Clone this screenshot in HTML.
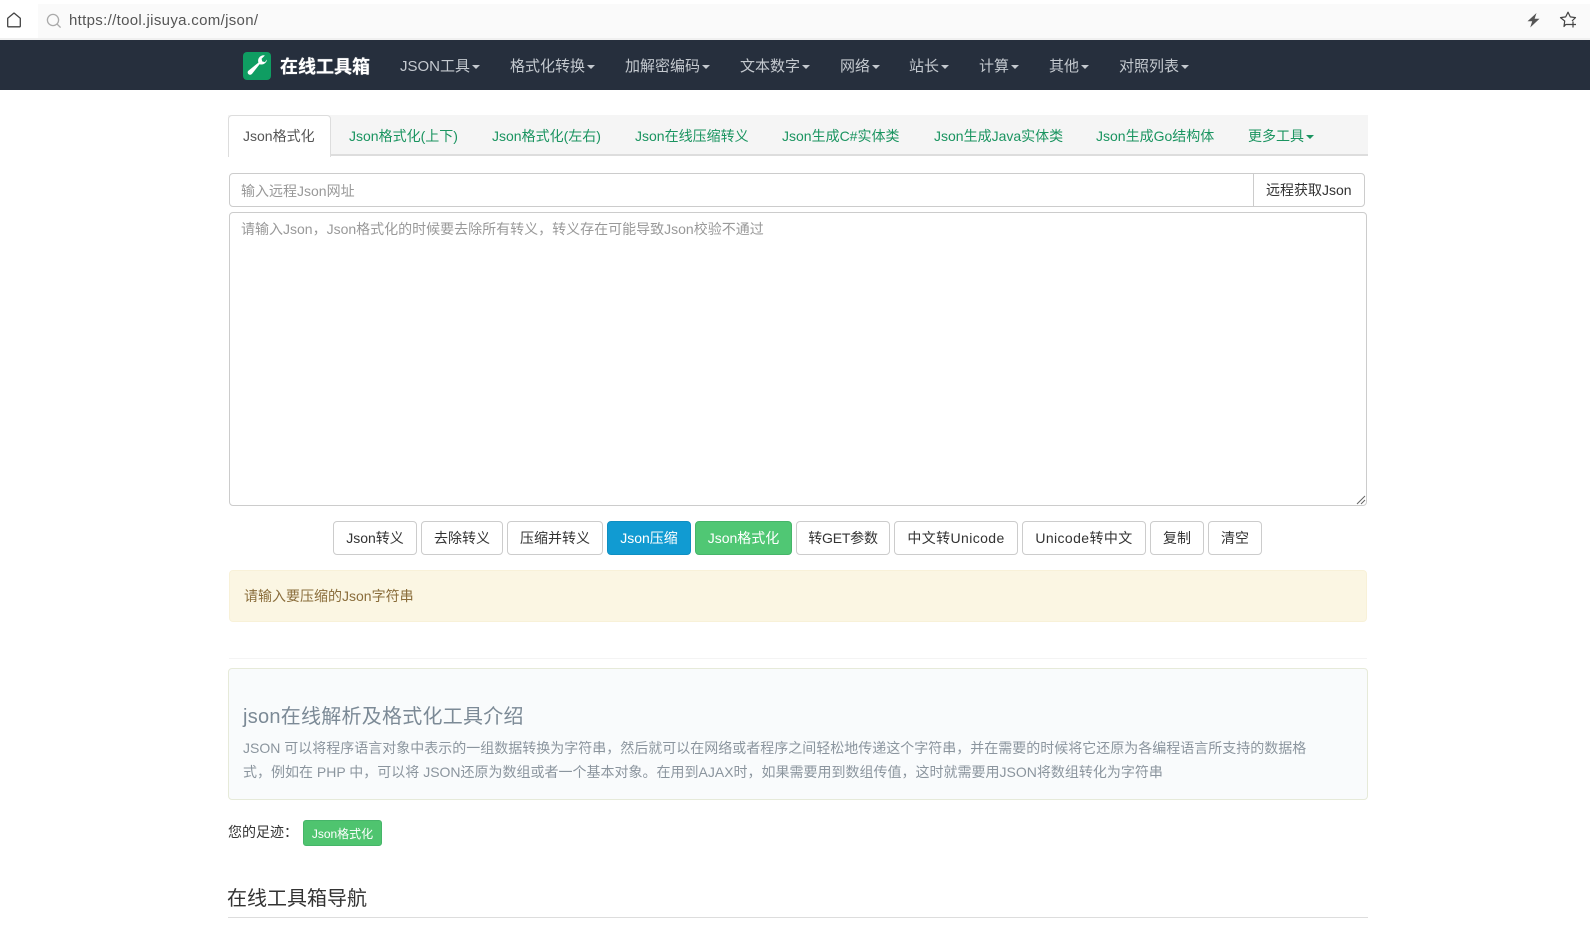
<!DOCTYPE html>
<html lang="zh-CN">
<head>
<meta charset="utf-8">
<title>Json格式化</title>
<style>
html,body{margin:0;padding:0;background:#fff;width:1590px;height:927px;overflow:hidden}
body{position:relative;font-family:"Liberation Sans","Noto Sans CJK SC",sans-serif;font-size:14px;color:#333}
.a{position:absolute;box-sizing:border-box}
.t{position:absolute;white-space:nowrap;line-height:20px;height:20px}
.nav{color:#c4c9cf;font-size:15px}
.tab{color:#1a9460;font-size:14px}
.caret{display:inline-block;width:0;height:0;margin-left:2px;vertical-align:middle;border-top:4px solid;border-left:4px solid transparent;border-right:4px solid transparent}
.btn{position:absolute;box-sizing:border-box;top:521px;height:34px;line-height:32px;text-align:center;white-space:nowrap;border:1px solid #ccc;border-radius:4px;background:#fff;color:#333;font-size:14px}
</style>
</head>
<body>
<!-- browser bar -->
<div class="a" style="left:38px;top:4px;width:1552px;height:34px;background:#fafafa"></div>
<div class="a" style="left:0;top:38px;width:1590px;height:2px;background:#f0f0f0"></div>
<svg class="a" style="left:6px;top:12px" width="16" height="16" viewBox="0 0 16 16" fill="none" stroke="#444" stroke-width="1.3"><path d="M1.700 6.200 8 1l6.300 5.200v8.100c0 .3-.2.5-.5.5H2.200c-.3 0-.5-.2-.5-.5z" stroke-linejoin="round"/></svg>
<svg class="a" style="left:46px;top:13px" width="16" height="16" viewBox="0 0 16 16" fill="none" stroke="#aaa" stroke-width="1.3"><circle cx="7" cy="7" r="5.6"/><path d="M11 11l3.600 3.600"/></svg>
<div class="t" style="left:69px;top:11px;font-size:15px;letter-spacing:.32px;color:#555">https://tool.jisuya.com/json/</div>
<svg class="a" style="left:1526px;top:12px" width="15" height="16" viewBox="0 0 15 16"><path d="M10.500 1 1.500 9.200h4.700L4.200 15.500 13.500 6.800H8.600z" fill="#555"/></svg>
<svg class="a" style="left:1559px;top:11px" width="18" height="17" viewBox="0 0 18 17" fill="none" stroke="#444" stroke-width="1.2"><path d="M11 13.500H6.700L5 15.500l.7-5.500L1.500 6.600l5.200-.7L9 1.200l2.300 4.700 5.200.7-3.500 3.400" stroke-linejoin="round"/><path d="M14 10.500v6M11 13.500h6"/></svg>

<!-- nav -->
<div class="a" style="left:0;top:40px;width:1590px;height:50px;background:#262f3d"></div>
<div class="a" style="left:243px;top:52px;width:28px;height:28px;background:#0f9d62;border-radius:4px"></div>
<svg class="a" style="left:243px;top:52px" width="28" height="28" viewBox="0 0 28 28"><path d="M24 7.500c-.3 2.800-2.600 5-5.500 5-.7 0-1.300-.1-1.900-.3L9 21.900c-.9 1.100-2.600 1.200-3.600.2-1-1-1-2.600.1-3.500l9.900-8c-.2-.6-.3-1.200-.3-1.800 0-3 2.500-5.500 5.500-5.500.5 0 .9.100 1.300.2l-3.300 3.200.6 2.700 2.700.7z" fill="#fff"/></svg>
<div class="t" style="left:280px;top:56px;font-size:18px;font-weight:700;color:#fff;text-shadow:0 0 .7px #fff;line-height:22px">在线工具箱</div>
<div class="t nav" style="left:400px;top:57px">JSON工具<span class="caret"></span></div>
<div class="t nav" style="left:510px;top:57px">格式化转换<span class="caret"></span></div>
<div class="t nav" style="left:625px;top:57px">加解密编码<span class="caret"></span></div>
<div class="t nav" style="left:740px;top:57px">文本数字<span class="caret"></span></div>
<div class="t nav" style="left:840px;top:57px">网络<span class="caret"></span></div>
<div class="t nav" style="left:909px;top:57px">站长<span class="caret"></span></div>
<div class="t nav" style="left:979px;top:57px">计算<span class="caret"></span></div>
<div class="t nav" style="left:1049px;top:57px">其他<span class="caret"></span></div>
<div class="t nav" style="left:1119px;top:57px">对照列表<span class="caret"></span></div>

<!-- tabs -->
<div class="a" style="left:228px;top:115px;width:1140px;height:41px;background:#f5f5f5;border-bottom:2px solid #ddd"></div>
<div class="a" style="left:228px;top:115px;width:103px;height:42px;background:#fff;border:1px solid #ddd;border-bottom:none;border-radius:4px 4px 0 0"></div>
<div class="t" style="left:243px;top:126px;color:#555">Json格式化</div>
<div class="t tab" style="left:349px;top:126px">Json格式化(上下)</div>
<div class="t tab" style="left:492px;top:126px">Json格式化(左右)</div>
<div class="t tab" style="left:635px;top:126px">Json在线压缩转义</div>
<div class="t tab" style="left:782px;top:126px">Json生成C#实体类</div>
<div class="t tab" style="left:934px;top:126px">Json生成Java实体类</div>
<div class="t tab" style="left:1096px;top:126px">Json生成Go结构体</div>
<div class="t tab" style="left:1248px;top:126px">更多工具<span class="caret"></span></div>

<!-- remote url -->
<div class="a" style="left:229px;top:173px;width:1136px;height:34px;border:1px solid #ccc;border-radius:4px;background:#fff"></div>
<div class="a" style="left:1253px;top:173px;width:1px;height:34px;background:#ccc"></div>
<div class="t" style="left:241px;top:181px;color:#999">输入远程Json网址</div>
<div class="t" style="left:1266px;top:180px;color:#333">远程获取Json</div>

<!-- textarea -->
<div class="a" style="left:229px;top:212px;width:1138px;height:294px;border:1px solid #ccc;border-radius:4px;background:#fff"></div>
<div class="t" style="left:241px;top:219px;color:#999">请输入Json，Json格式化的时候要去除所有转义，转义存在可能导致Json校验不通过</div>
<svg class="a" style="left:1356px;top:495px" width="10" height="10" viewBox="0 0 10 10" stroke="#666" stroke-width="1" fill="none"><path d="M1 9 9 1M5 9 9 5"/></svg>

<!-- buttons -->
<div class="btn" style="left:333px;width:84px">Json转义</div>
<div class="btn" style="left:421px;width:82px">去除转义</div>
<div class="btn" style="left:507px;width:96px">压缩并转义</div>
<div class="btn" style="left:607px;width:84px;background:#119bd2;border-color:#0f8fc2;color:#fff">Json压缩</div>
<div class="btn" style="left:695px;width:97px;background:#50c774;border-color:#46b569;color:#fff">Json格式化</div>
<div class="btn" style="left:796px;width:94px;letter-spacing:-.2px">转GET参数</div>
<div class="btn" style="left:894px;width:124px;letter-spacing:.4px">中文转Unicode</div>
<div class="btn" style="left:1022px;width:124px;letter-spacing:.4px">Unicode转中文</div>
<div class="btn" style="left:1150px;width:54px">复制</div>
<div class="btn" style="left:1208px;width:54px">清空</div>

<!-- alert -->
<div class="a" style="left:229px;top:570px;width:1138px;height:52px;background:#fbf6e3;border:1px solid #f8f1d8;border-radius:4px"></div>
<div class="t" style="left:244px;top:586px;color:#8a6d3b">请输入要压缩的Json字符串</div>

<div class="a" style="left:229px;top:658px;width:1138px;height:1px;background:#f4f4f4"></div>

<!-- intro -->
<div class="a" style="left:228px;top:668px;width:1140px;height:132px;background:#f9fbfc;border:1px solid #e6ead9;border-radius:4px"></div>
<div class="t" style="left:243px;top:707px;font-size:20px;letter-spacing:.25px;color:#7c8a96">json在线解析及格式化工具介绍</div>
<div class="t" style="left:243px;top:738px;color:#8b959e">JSON 可以将程序语言对象中表示的一组数据转换为字符串，然后就可以在网络或者程序之间轻松地传递这个字符串，并在需要的时候将它还原为各编程语言所支持的数据格</div>
<div class="t" style="left:243px;top:762px;color:#8b959e">式，例如在 PHP 中，可以将 JSON还原为数组或者一个基本对象。在用到AJAX时，如果需要用到数组传值，这时就需要用JSON将数组转化为字符串</div>

<!-- footprint -->
<div class="t" style="left:228px;top:822px;color:#333">您的足迹：</div>
<div class="a" style="left:303px;top:820px;width:79px;height:26px;background:#4fc46f;border:1px solid #46b569;border-radius:3px;color:#fff;font-size:12px;line-height:26px;text-align:center;white-space:nowrap">Json格式化</div>

<!-- heading -->
<div class="t" style="left:227px;top:889px;font-size:20px;color:#333">在线工具箱导航</div>
<div class="a" style="left:228px;top:917px;width:1140px;height:1px;background:#ddd"></div>
</body>
</html>
